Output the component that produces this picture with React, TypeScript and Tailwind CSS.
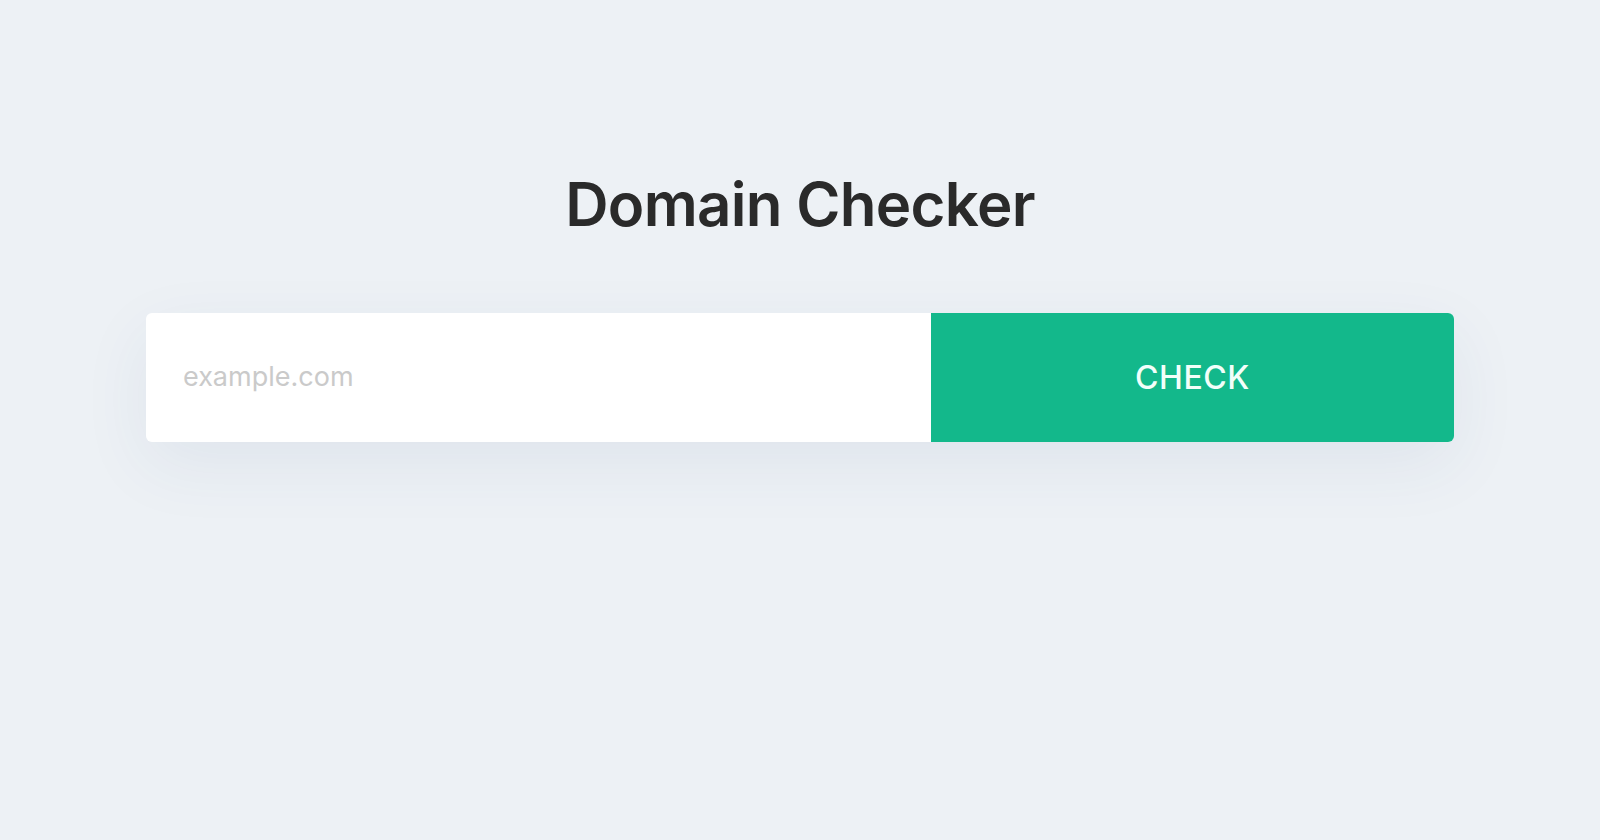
import React from "react";

export default function App() {
  return (
    <div
      className="min-h-[840px] w-full bg-[#edf1f5] flex flex-col items-center pt-[166px]"
      style={{ fontFamily: "Inter, 'Liberation Sans', sans-serif" }}
    >
      <h1 className="text-[60px] leading-[76px] font-semibold text-[#2a2a2a] tracking-[-0.7px]">
        Domain Checker
      </h1>
      <div className="mt-[71px] w-[1308px] h-[129px] flex rounded-[6px] bg-white shadow-[0_22px_70px_rgba(40,70,130,0.07)] overflow-hidden">
        <div className="w-[60%] flex items-center pl-[37px]">
          <input
            placeholder="example.com"
            className="w-full outline-none bg-transparent text-[27px] text-[#333] placeholder:text-[#cacaca]"
          />
        </div>
        <button className="w-[40%] bg-[#13b88b] text-[#f2fffa] text-[32px] font-medium tracking-[0.5px] flex items-center justify-center">
          CHECK
        </button>
      </div>
    </div>
  );
}
